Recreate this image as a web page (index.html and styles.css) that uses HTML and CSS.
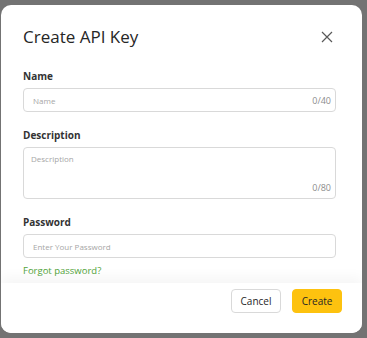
FILE: index.html
```html
<!DOCTYPE html>
<html lang="en">
<head>
  <meta charset="UTF-8" />
  <meta name="viewport" content="width=device-width, initial-scale=1.0"/>
  <title>Create API Key</title>
  <link rel="stylesheet" href="styles.css">
</head>
<body>
  <div class="backdrop">
    <div class="modal">
      <div class="modal-header">
        <h2>Create API Key</h2>
        <button class="close-btn" aria-label="Close">
          <svg width="12" height="12" viewBox="0 0 12 12">
            <path d="M1 1L11 11M11 1L1 11" stroke="#595959" stroke-width="1.2" fill="none"/>
          </svg>
        </button>
      </div>

      <div class="modal-body">
        <div class="field">
          <label>Name</label>
          <div class="input-box">
            <span class="placeholder">Name</span>
            <span class="counter">0/40</span>
          </div>
        </div>

        <div class="field">
          <label>Description</label>
          <div class="input-box textarea">
            <span class="placeholder">Description</span>
            <span class="counter">0/80</span>
          </div>
        </div>

        <div class="field">
          <label>Password</label>
          <div class="input-box">
            <span class="placeholder">Enter Your Password</span>
          </div>
          <a class="forgot" href="#">Forgot password?</a>
        </div>
      </div>

      <div class="modal-footer">
        <button class="btn">Cancel</button>
        <button class="btn primary">Create</button>
      </div>
    </div>
  </div>
</body>
</html>
```

FILE: styles.css
```css
html, body {
  margin: 0;
  padding: 0;
  width: 100vw;
  height: 100vh;
  overflow: hidden;
  font-family: 'Open Sans', 'Noto Sans', sans-serif;
}

.backdrop {
  box-sizing: border-box;
  height: 100%;
  padding: 5px 5px 5px 1px;
  background: #737373;
  display: flex;
}

.modal {
  flex: 1;
  background: #fff;
  border-radius: 10px;
  display: flex;
  flex-direction: column;
  overflow: hidden;
}

.modal-header {
  display: flex;
  align-items: center;
  justify-content: space-between;
  padding: 20px 20px 0 22px;
}

h2 {
  margin: 0;
  font-size: 17px;
  line-height: 24px;
  font-weight: 500;
  color: #262626;
}

.close-btn {
  border: none;
  background: none;
  padding: 0;
  width: 22px;
  height: 22px;
  display: flex;
  align-items: center;
  justify-content: center;
  margin-right: 4px;
}

.modal-body {
  flex: 1;
  min-height: 0;
  padding: 20px 26px 0 22px;
}

.field {
  display: flex;
  flex-direction: column;
  margin-bottom: 16px;
}

.field:last-child {
  margin-bottom: 0;
}

.field label {
  font-size: 10px;
  line-height: 14px;
  font-weight: 700;
  color: #333;
  margin-bottom: 5px;
}

.input-box {
  box-sizing: border-box;
  height: 24px;
  border: 1px solid #d9d9d9;
  border-radius: 4px;
  display: flex;
  align-items: center;
  justify-content: space-between;
  padding: 0 4px 0 9px;
}

.input-box.textarea {
  height: 52px;
  flex-direction: column;
  align-items: stretch;
  padding: 5px 4px 4px 7px;
}

.textarea .counter {
  align-self: flex-end;
}

.placeholder {
  font-size: 8px;
  color: #a6a6a6;
}

.counter {
  font-size: 9px;
  color: #8c8c8c;
}

.forgot {
  margin-top: 6px;
  font-size: 9.5px;
  line-height: 13px;
  color: #52a43a;
  text-decoration: none;
}

.modal-footer {
  position: relative;
  flex-shrink: 0;
  display: flex;
  justify-content: flex-end;
  gap: 11px;
  padding: 6px 20px 20px;
  background: #fff;
  box-shadow: 0 -6px 12px rgba(0, 0, 0, 0.04);
}

.btn {
  width: 50px;
  height: 24px;
  border: 1px solid #d9d9d9;
  border-radius: 4px;
  background: #fff;
  font-family: inherit;
  font-size: 10px;
  color: #262626;
  padding: 0;
}

.btn.primary {
  background: #fdc20f;
  border-color: #fdc20f;
}
```
